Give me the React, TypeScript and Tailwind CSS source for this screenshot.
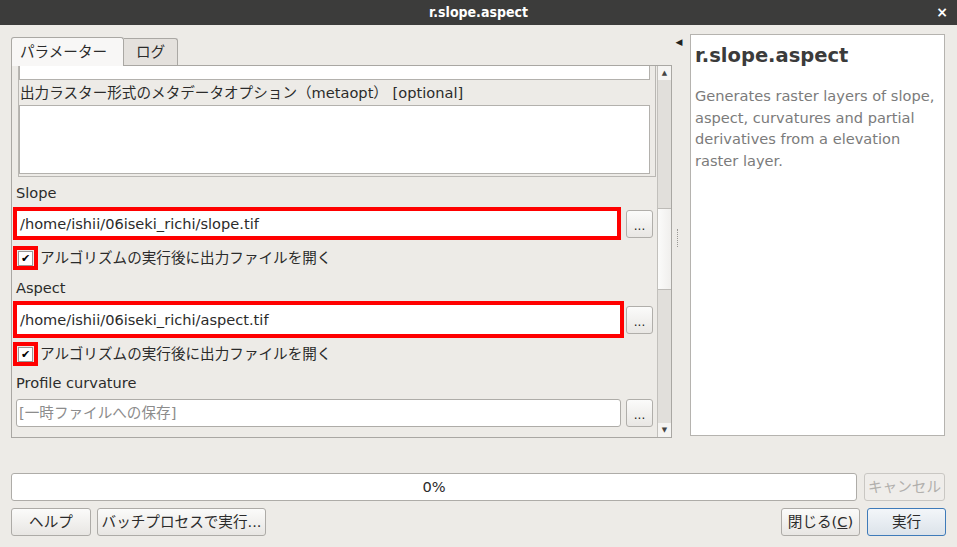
import React from "react";

const FONT = "font-['DejaVu_Sans','Noto_Sans_CJK_JP',sans-serif]";

function DotsButton() {
  return (
    <button className="w-[27px] h-[28px] rounded-[3px] border border-[#b0aeaa] bg-gradient-to-b from-[#fbfbfa] to-[#e9e7e4] text-[12px] leading-none text-[#222] flex items-center justify-center pt-[4px]">
      ...
    </button>
  );
}

function Check() {
  return (
    <div className="flex items-center h-[24px]">
      <div className="ml-[1px] w-[25px] h-[24px] border-[4px] border-[#ff0000] flex items-center justify-center">
        <div className="w-[15px] h-[15px] bg-white border border-[#9a9a9a] flex items-center justify-center text-[11px] leading-none text-black">
          ✔
        </div>
      </div>
      <span className="ml-[2px]">アルゴリズムの実行後に出力ファイルを開く</span>
    </div>
  );
}

function Btn({ children, w, primary = false, disabled = false }: { children: React.ReactNode; w: string; primary?: boolean; disabled?: boolean }) {
  return (
    <button
      className={`${w} h-[28px] rounded-[3px] border flex items-center justify-center ${
        primary
          ? "border-[#3f7bb9] bg-gradient-to-b from-[#f3f6f9] to-[#dce3ea]"
          : disabled
          ? "border-[#c9c7c3] bg-[#efedea] text-[#b2b0ad]"
          : "border-[#adaba7] bg-gradient-to-b from-[#fbfbfa] to-[#e8e6e3]"
      }`}
    >
      {children}
    </button>
  );
}

export default function App() {
  return (
    <div className={`${FONT} w-[957px] h-[547px] bg-[#edebe7] flex flex-col overflow-hidden text-[14.6px] text-[#2b2b2b]`}>
      {/* title bar */}
      <div className="h-[25px] bg-[#3c3c3b] grid grid-cols-[1fr_auto_1fr] items-center text-white">
        <div />
        <div className="font-['DejaVu_Sans_Condensed',sans-serif] font-bold text-[14px]">r.slope.aspect</div>
        <div className="flex justify-end pr-[9px] text-[14px] font-bold">×</div>
      </div>

      <div className="flex pl-[11px] pt-[10px]">
        {/* left column */}
        <div className="w-[661px] flex flex-col">
          <div className="flex items-end h-[29px] mt-[1px]">
            <div className="w-[113px] h-[29px] border border-b-0 border-[#aaa8a4] rounded-t-[3px] bg-[#f8f7f6] flex items-center pl-[8px] relative top-[1px]">
              パラメーター
            </div>
            <div className="w-[54px] h-[27px] border border-l-0 border-b-0 border-[#aaa8a4] rounded-tr-[3px] bg-[#e4e1dd] flex items-center pl-[12px]">
              ログ
            </div>
          </div>

          <div className="h-[373px] border border-[#a9a7a3] flex bg-[#edebe7]">
            <div className="flex-1 overflow-hidden flex flex-col">
              {/* frame */}
              <div className="ml-[6px] mr-[1px] border-l border-r border-b border-[#b9b7b3] pr-[5px] pb-[2px]">
                <div className="h-[14px] bg-white border-b border-x border-[#b3b1ad]" />
                <div className="h-[25px] flex items-center pl-[1px]">出力ラスター形式のメタデータオプション（metaopt） [optional]</div>
                <div className="h-[69px] bg-white border border-[#b3b1ad]" />
              </div>

              <div className="h-[20px] mt-[6px] flex items-center pl-[4px]">Slope</div>
              <div className="mt-[4px] flex items-center h-[33px]">
                <div className="ml-[1px] w-[608px] h-[33px] border-[4px] border-[#ff0000] bg-white flex items-center pl-[3px]">
                  /home/ishii/06iseki_richi/slope.tif
                </div>
                <div className="ml-[5px]">
                  <DotsButton />
                </div>
              </div>
              <div className="mt-[6px]">
                <Check />
              </div>

              <div className="h-[20px] mt-[8px] flex items-center pl-[4px]">Aspect</div>
              <div className="mt-[3px] flex items-center h-[37px]">
                <div className="ml-[1px] w-[611px] h-[37px] border-[4px] border-[#ff0000] bg-white flex items-center pl-[3px]">
                  /home/ishii/06iseki_richi/aspect.tif
                </div>
                <div className="ml-[2px]">
                  <DotsButton />
                </div>
              </div>
              <div className="mt-[4px]">
                <Check />
              </div>

              <div className="h-[20px] mt-[7px] flex items-center pl-[4px]">Profile curvature</div>
              <div className="mt-[6px] flex items-center h-[28px]">
                <div className="ml-[4px] w-[605px] h-[28px] rounded-[3px] border border-[#aeaca8] bg-white flex items-center pl-[2px] text-[#8c8c8c]">
                  [一時ファイルへの保存]
                </div>
                <div className="ml-[5px]">
                  <DotsButton />
                </div>
              </div>
            </div>

            {/* scrollbar */}
            <div className="w-[14px] border-l border-[#c2c0bc] flex flex-col bg-[#e1dfdb]">
              <div className="h-[14px] bg-[#f5f4f2] flex items-center justify-center text-[7px] text-[#444] leading-none">▲</div>
              <div className="h-[128px]" />
              <div className="h-[82px] bg-gradient-to-r from-[#fbfbfa] to-[#f0efed] border-y border-[#bdbbb7]" />
              <div className="flex-1" />
              <div className="h-[14px] bg-[#f5f4f2] flex items-center justify-center text-[7px] text-[#444] leading-none">▼</div>
            </div>
          </div>
        </div>

        {/* splitter */}
        <div className="w-[18px] h-[402px] flex flex-col items-center">
          <div className="mt-[3px] ml-[-4px] text-[9px] leading-none text-[#222]">◀</div>
          <div className="mt-[182px] ml-[-7px] h-[18px] border-l border-dotted border-[#9b9995]" />
        </div>

        {/* help panel */}
        <div className="w-[255px] h-[402px] -mt-[1px] border border-[#b5b3af] bg-white px-[4px] pt-[6px]">
          <div className="font-bold text-[19.5px] text-[#3b3b3b] leading-[30px]">r.slope.aspect</div>
          <div className="mt-[14px] text-[14.6px] leading-[21.5px] text-[#7b7b7b]">
            Generates raster layers of slope, aspect, curvatures and partial derivatives from a elevation raster layer.
          </div>
        </div>
      </div>

      {/* progress */}
      <div className="flex px-[11px] mt-[35px] gap-[7px]">
        <div className="w-[846px] h-[28px] rounded-[3px] border border-[#aeaca8] bg-white flex items-center justify-center">0%</div>
        <Btn w="w-[81px]" disabled>
          キャンセル
        </Btn>
      </div>

      {/* buttons */}
      <div className="flex px-[11px] mt-[7px]">
        <Btn w="w-[80px]">ヘルプ</Btn>
        <div className="ml-[6px]">
          <Btn w="w-[169px] px-[3px]">バッチプロセスで実行...</Btn>
        </div>
        <div className="flex-1" />
        <Btn w="w-[79px]">
          閉じる(<span className="underline">C</span>)
        </Btn>
        <div className="ml-[7px]">
          <Btn w="w-[79px]" primary>
            実行
          </Btn>
        </div>
      </div>
    </div>
  );
}
